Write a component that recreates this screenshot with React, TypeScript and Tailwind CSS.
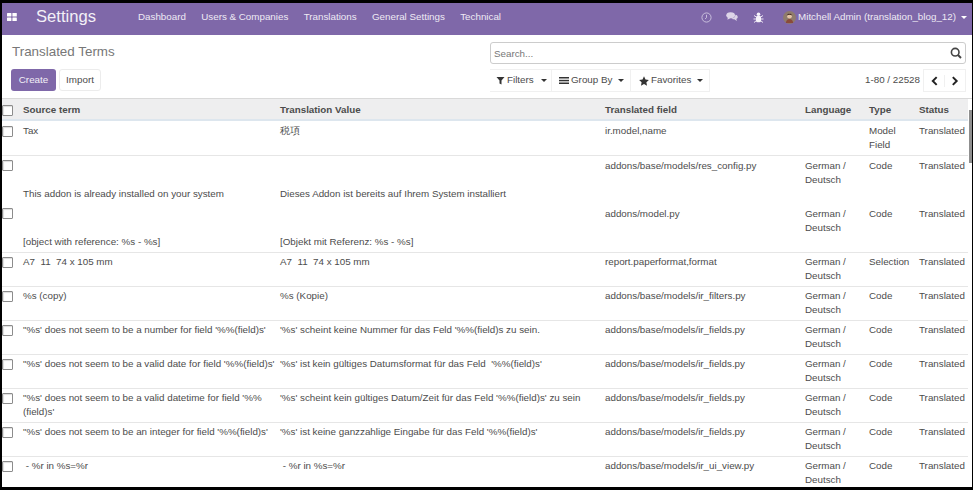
function Check() {
  return <span className="block w-[11px] h-[11px] border border-[#8c8c8c] bg-white rounded-[1px] shadow-[inset_1px_1px_1px_#ddd]" />;
}
function Caret() {
  return <span className="w-0 h-0 border-x-[3px] border-x-transparent border-t-[3px] border-t-[#333]" />;
}
function TableRow({ s, v, f, l = true, t, h, sub, border = true, top = "pt-[2px]" }: { s: string; v: string; f: string; l?: boolean; t: string; h: string; sub?: string; border?: boolean; top?: string }) {
  return (
    <div className={`w-[966px] flex ${h} ${border ? "border-t border-[#e6e6e6]" : ""} text-[#4c4c4c] leading-[14px]`}>
      <div className={`w-[21px] shrink-0 ${border ? "pt-[4px]" : "pt-[5px]"}`}><Check /></div>
      <div className={`w-[257px] shrink-0 ${sub ?? top} pr-[2px] whitespace-pre-wrap`}>{s}</div>
      <div className={`w-[325px] shrink-0 ${sub ?? top} pr-[2px] whitespace-pre-wrap`}>{v}</div>
      <div className={`w-[200px] shrink-0 ${top}`}>{f}</div>
      <div className={`w-[64px] shrink-0 ${top}`}>{l ? "German / Deutsch" : ""}</div>
      <div className={`w-[50px] shrink-0 ${top}`}>{t}</div>
      <div className={top}>Translated</div>
    </div>
  );
}
export default function App() {
  return (
    <div className="w-[973px] h-[490px] overflow-hidden bg-black pt-[3px] pl-[2px] pb-[3px] text-[9.8px] font-['Liberation_Sans',Arial,sans-serif]">
      <div className="w-[970px] h-[484px] bg-white flex flex-col overflow-hidden">
        <header className="h-[32px] shrink-0 bg-[#7f68a9] text-white flex items-center pb-[4px]">
          <svg width="10" height="8" viewBox="0 0 10 8" className="ml-[5px]" fill="#fff">
            <rect x="0" y="0" width="4.4" height="3.5" rx=".5" /><rect x="5.4" y="0" width="4.4" height="3.5" rx=".5" />
            <rect x="0" y="4.5" width="4.4" height="3.5" rx=".5" /><rect x="5.4" y="4.5" width="4.4" height="3.5" rx=".5" />
          </svg>
          <span className="ml-[19px] text-[16.6px] text-[#f3f0f7]">Settings</span>
          <nav className="ml-[42px] flex gap-[15.3px] text-[#eeeaf4] text-[9.8px]">
            <span>Dashboard</span><span>Users &amp; Companies</span><span>Translations</span><span>General Settings</span><span>Technical</span>
          </nav>
          <div className="ml-auto flex items-center">
            <svg width="11" height="11" viewBox="0 0 12 12" fill="none" stroke="#cfc6e0" strokeWidth="1"><circle cx="6" cy="6" r="5" /><path d="M6 3v3.200L4.400 7.600" /></svg>
            <svg width="12" height="10" viewBox="0 0 13 11" fill="#ddd5e8" className="ml-[14px]"><ellipse cx="5" cy="3.500" rx="4.800" ry="3.300" /><path d="M2 5.500L1.500 8.500 5 6.500z" /><path d="M10.300 3c1.600.4 2.500 1.300 2.500 2.500 0 1-.6 1.700-1.500 2.100l.5 2.400-2.800-2H7.500C6.500 8 6 7.500 5.700 7c2.300 0 4.600-1.500 4.600-4z" /></svg>
            <svg width="11" height="11" viewBox="0 0 11 11" fill="#f6f3fa" className="ml-[15px]"><circle cx="5.500" cy="2.200" r="1.800" /><rect x="3" y="3.800" width="5" height="6.500" rx="1.500" /><path d="M1 3.500l2.300 1.500M10 3.500L7.700 5M.5 7h2.500M10.500 7H8M1 10.500l2.300-1.800M10 10.500L7.700 8.700" stroke="#f6f3fa" strokeWidth=".9" /></svg>
            <svg width="13" height="13" viewBox="0 0 13 13" className="ml-[19px]"><circle cx="6.500" cy="6.500" r="6.500" fill="#8f7b6c" /><circle cx="6.500" cy="5.200" r="2.400" fill="#e4c4a6" /><path d="M2.800 12c.5-3 1.800-4 3.700-4s3.200 1 3.700 4z" fill="#8a4a3a" /><path d="M3.800 4.500C4 2.300 9 2.300 9.200 4.500 8 3.500 5 3.500 3.800 4.500z" fill="#40291e" /></svg>
            <span className="ml-[2px] text-[9.8px] text-[#eeeaf4]">Mitchell Admin (translation_blog_12)</span>
            <span className="ml-[5px] mr-[5px] w-0 h-0 border-x-[3px] border-x-transparent border-t-[3px] border-t-white" />
          </div>
        </header>
        <div className="h-[64px] shrink-0 flex border-b border-[#d9d9d9]">
          <div className="flex-1">
            <h1 className="mt-[8px] ml-[10px] text-[13.4px] leading-[18px] text-[#777]">Translated Terms</h1>
            <div className="mt-[8px] ml-[9px] flex gap-[3px]">
              <button className="w-[45px] h-[22px] bg-[#7f68a9] text-[#f3f0f7] rounded-[3px] text-[9.8px]">Create</button>
              <button className="w-[42px] h-[22px] bg-white text-[#4c4c4c] border border-[#ececec] rounded-[3px] text-[9.8px]">Import</button>
            </div>
          </div>
          <div className="w-[482px] shrink-0 pr-[6px]">
            <div className="mt-[7px] h-[22px] border border-[#ccc] rounded-[3px] flex items-center pl-[3px] pr-[3px] text-[#777] text-[9.8px] justify-between">
              <span className="mt-[2px]">Search...</span>
              <svg width="12" height="12" viewBox="0 0 12 12" fill="none" stroke="#444" strokeWidth="1.600"><circle cx="5.200" cy="5.200" r="3.800" /><path d="M8 8l3 3" strokeWidth="2" /></svg>
            </div>
            <div className="mt-[5px] flex items-center text-[#4c4c4c] text-[9.8px]">
              <div className="h-[23px] w-[62px] border-r border-y border-[#f0f0f0] flex items-center pl-[6px]">
                <svg width="9" height="9" viewBox="0 0 9 9" fill="#333"><path d="M.5 1h8L5.500 4.500V8.500L3.500 7.500V4.500z" /></svg>
                <span className="ml-[2px] mr-[7px]">Filters</span>
                <Caret />
              </div>
              <div className="h-[23px] w-[79px] border-r border-y border-[#f0f0f0] flex items-center pl-[7px]">
                <svg width="10" height="9" viewBox="0 0 10 9" fill="#333"><rect y="1" width="10" height="1.500" /><rect y="3.800" width="10" height="1.500" /><rect y="6.500" width="10" height="1.500" /></svg>
                <span className="ml-[2px] mr-[6px]">Group By</span>
                <Caret />
              </div>
              <div className="h-[23px] w-[79px] border-r border-y border-[#f0f0f0] flex items-center pl-[8px]">
                <svg width="10" height="10" viewBox="0 0 10 10" fill="#333"><path d="M5 .3l1.500 3.100 3.400.5-2.500 2.400.6 3.400L5 8.100 2 9.700l.6-3.400L.1 3.900l3.400-.5z" /></svg>
                <span className="ml-[2px] mr-[6px]">Favorites</span>
                <Caret />
              </div>
              <span className="ml-auto">1-80 / 22528</span>
              <div className="ml-[3px] h-[23px] w-[43px] border border-[#f0f0f0] flex items-center">
                <svg width="21" height="12" viewBox="0 0 21 12" fill="none" stroke="#222" strokeWidth="2" className="border-r border-[#f0f0f0] box-content"><path d="M13 2L9 6l4 4" /></svg>
                <svg width="20" height="12" viewBox="0 0 20 12" fill="none" stroke="#222" strokeWidth="2"><path d="M8 2l4 4-4 4" /></svg>
              </div>
            </div>
          </div>
        </div>
        <div className="relative flex-1 overflow-hidden">
          <div className="w-[966px] flex h-[22px] pt-[3px] bg-[#eeeeef] border-b-2 border-[#dde6ee] font-bold text-[#4c4c4c] items-center">
            <div className="w-[21px] shrink-0"><Check /></div>
            <div className="w-[257px] shrink-0">Source term</div>
            <div className="w-[325px] shrink-0">Translation Value</div>
            <div className="w-[200px] shrink-0">Translated field</div>
            <div className="w-[64px] shrink-0">Language</div>
            <div className="w-[50px] shrink-0">Type</div>
            <div>Status</div>
          </div>
          <TableRow border={false} top="pt-[3px]" s="Tax" v="税項" f="ir.model,name" l={false} t="Model Field" h="h-[34px]" />
          <TableRow top="pt-[3px]" sub="pt-[31px]" s="This addon is already installed on your system" v="Dieses Addon ist bereits auf Ihrem System installiert" f="addons/base/models/res_config.py" t="Code" h="h-[48px]" />
          <TableRow border={false} top="pt-[4px]" sub="pt-[32px]" s="[object with reference: %s - %s]" v="[Objekt mit Referenz: %s - %s]" f="addons/model.py" t="Code" h="h-[49px]" />
          <TableRow s="A7  11  74 x 105 mm" v="A7  11  74 x 105 mm" f="report.paperformat,format" t="Selection" h="h-[34px]" />
          <TableRow s="%s (copy)" v="%s (Kopie)" f="addons/base/models/ir_filters.py" t="Code" h="h-[34px]" />
          <TableRow s={`"%s' does not seem to be a number for field '%%(field)s'`} v={`'%s' scheint keine Nummer für das Feld '%%(field)s zu sein.`} f="addons/base/models/ir_fields.py" t="Code" h="h-[34px]" />
          <TableRow s={`"%s' does not seem to be a valid date for field '%%(field)s'`} v={`'%s' ist kein gültiges Datumsformat für das Feld  '%%(field)s'`} f="addons/base/models/ir_fields.py" t="Code" h="h-[34px]" />
          <TableRow s={`"%s' does not seem to be a valid datetime for field '%%(field)s'`} v={`'%s' scheint kein gültiges Datum/Zeit für das Feld '%%(field)s' zu sein`} f="addons/base/models/ir_fields.py" t="Code" h="h-[34px]" />
          <TableRow s={`"%s' does not seem to be an integer for field '%%(field)s'`} v={`'%s' ist keine ganzzahlige Eingabe für das Feld '%%(field)s'`} f="addons/base/models/ir_fields.py" t="Code" h="h-[34px]" />
          <TableRow s={` - %r in %s=%r`} v={` - %r in %s=%r`} f="addons/base/models/ir_ui_view.py" t="Code" h="h-[34px]" />
          <div className="absolute right-0 top-[11px] w-[3px] h-[53px] bg-[#8f8f8f]" />
        </div>
      </div>
    </div>
  );
}
